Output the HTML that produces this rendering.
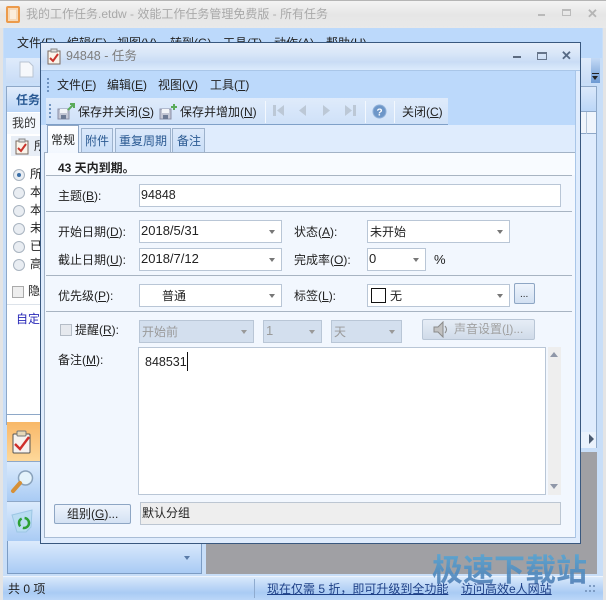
<!DOCTYPE html>
<html><head><meta charset="utf-8">
<style>
html,body{margin:0;padding:0;background:#fff}
#r{position:relative;width:606px;height:600px;overflow:hidden;background:#dfecfd;font:12px/16px "Liberation Sans","Noto Sans CJK SC",sans-serif;color:#222}
#r div,#r span.t,#r svg{position:absolute}
.t{white-space:nowrap}
u{text-decoration:underline}
.inp{background:#fff;border:1px solid #b9c6d6;box-sizing:border-box}
.dis{background:#d3dfee;border:1px solid #b9c6d6;box-sizing:border-box}
.arr{width:0;height:0;border-left:3.5px solid transparent;border-right:3.5px solid transparent;border-top:4px solid #777}
.ln{height:1px;background:#a8b4c2}
.rad{width:12px;height:12px;border-radius:50%;border:1px solid #a9b4c0;background:#e9edf2;box-sizing:border-box}
.dot{width:2px;height:2px;background:#6f93c0}
.d{font-size:13px}
</style></head><body><div id="r">

<!-- main window -->
<div style="left:0;top:0;width:606px;height:1px;background:#b5b5b5"></div>
<div style="left:0;top:1px;width:606px;height:27px;background:linear-gradient(#f4f4f4,#e6e6e6 50%,#e9e9e9)"></div>
<svg style="left:6px;top:6px" width="14" height="17"><rect x="1" y="1" width="12" height="15" rx="1" fill="#f6d9b8" stroke="#ec9a4a" stroke-width="2"/><rect x="4" y="4" width="6" height="9" fill="#fbeedd"/></svg>
<span class="t" style="left:26px;top:6px;color:#a9a9a9">我的工作任务.etdw - 效能工作任务管理免费版 - 所有任务</span>
<div style="left:538px;top:14px;width:7px;height:2px;background:#b9b9b9"></div>
<div style="left:562px;top:9px;width:9px;height:7px;border:1px solid #bbb;border-top-width:2px;box-sizing:border-box"></div>
<span class="t" style="left:587px;top:6px;color:#b5b5b5;font-weight:bold;font-size:13px">✕</span>

<div style="left:0;top:28px;width:606px;height:572px;background:#c8def8"></div>
<div style="left:0;top:28px;width:3px;height:572px;background:#e4e4e4"></div>
<div style="left:603px;top:28px;width:3px;height:572px;background:#e4e4e4"></div>
<div style="left:4px;top:28px;width:598px;height:30px;background:#bcd9fb"></div>
<span class="t" style="left:17px;top:35px">文件(F)</span>
<span class="t" style="left:67px;top:35px">编辑(E)</span>
<span class="t" style="left:117px;top:35px">视图(V)</span>
<span class="t" style="left:170px;top:35px">转到(G)</span>
<span class="t" style="left:223px;top:35px">工具(T)</span>
<span class="t" style="left:274px;top:35px">动作(A)</span>
<span class="t" style="left:326px;top:35px">帮助(H)</span>
<div style="left:6px;top:58px;width:590px;height:25px;background:linear-gradient(#dfebfb,#c8dcf6)"></div>
<div style="left:591px;top:58px;width:9px;height:25px;background:linear-gradient(#c4daf6,#6d9ad3)"></div>
<div style="left:592px;top:73px;width:7px;height:1px;background:#222"></div>
<div class="arr" style="left:592px;top:76px;border-top-color:#222"></div>
<svg style="left:19px;top:61px" width="15" height="17"><path d="M1 1h9l4 4v11H1z" fill="#f6f8fb" stroke="#b9c4d2"/></svg>

<!-- left pane -->
<div style="left:6px;top:86px;width:35px;height:339px;background:#fff;border:1px solid #8ea8c8;box-sizing:border-box"></div>
<div style="left:7px;top:87px;width:34px;height:25px;background:linear-gradient(#e3eefc,#b9d5f7)"></div>
<span class="t" style="left:16px;top:92px;color:#2a5a94;font-weight:bold">任务</span>
<div style="left:7px;top:113px;width:34px;height:21px;background:#f4f8fd"></div>
<span class="t" style="left:12px;top:115px;color:#333">我的</span>
<div style="left:11px;top:136px;width:30px;height:20px;background:#e8eef6"></div>
<svg style="left:15px;top:138px" width="15" height="17"><rect x="1" y="3" width="12" height="13" fill="#fbf4ea" stroke="#7a6a60"/><rect x="4" y="1" width="6" height="3" fill="#ddd" stroke="#888"/><path d="M3 10l3 3 5-7" stroke="#c8342c" stroke-width="2" fill="none"/></svg>
<span class="t" style="left:34px;top:138px">所</span>
<div class="rad" style="left:13px;top:169px"></div><div style="left:17px;top:173px;width:4px;height:4px;border-radius:50%;background:#3b6fa8"></div>
<div class="rad" style="left:13px;top:187px"></div>
<div class="rad" style="left:13px;top:205px"></div>
<div class="rad" style="left:13px;top:223px"></div>
<div class="rad" style="left:13px;top:241px"></div>
<div class="rad" style="left:13px;top:259px"></div>
<span class="t" style="left:30px;top:166px">所</span>
<span class="t" style="left:30px;top:184px">本</span>
<span class="t" style="left:30px;top:202px">本</span>
<span class="t" style="left:30px;top:220px">未</span>
<span class="t" style="left:30px;top:238px">已</span>
<span class="t" style="left:30px;top:256px">高</span>
<div style="left:12px;top:286px;width:12px;height:12px;background:#eee;border:1px solid #aaa;box-sizing:border-box"></div>
<span class="t" style="left:28px;top:283px">隐</span>
<div style="left:7px;top:304px;width:34px;height:1px;background:#dde3ea"></div>
<span class="t" style="left:16px;top:311px;color:#2a2ab8">自定</span>
<div style="left:7px;top:414px;width:34px;height:1px;background:#8ea8c8"></div>
<div style="left:7px;top:422px;width:34px;height:39px;background:linear-gradient(#f8b868,#fbc47c 40%,#fdd89a)"></div>
<svg style="left:11px;top:429px" width="22" height="26"><rect x="2" y="5" width="17" height="19" rx="1" fill="#f6f2ee" stroke="#555"/><rect x="6" y="2" width="9" height="5" rx="1" fill="#e6d8b8" stroke="#777"/><path d="M4 15l5 5 9-12" stroke="#cf2f2a" stroke-width="2.4" fill="none"/></svg>
<div style="left:7px;top:461px;width:34px;height:40px;background:linear-gradient(#dcebfc,#a9cbf4);border-top:1px solid #8ea8c8;box-sizing:border-box"></div>
<svg style="left:10px;top:468px" width="26" height="26"><circle cx="15.500" cy="10" r="7" fill="#e5f3fb" stroke="#8aa2bb" stroke-width="1.500"/><path d="M10 15l-7 8" stroke="#d69038" stroke-width="4" stroke-linecap="round"/></svg>
<div style="left:7px;top:501px;width:34px;height:40px;background:linear-gradient(#dcebfc,#a9cbf4);border-top:1px solid #8ea8c8;box-sizing:border-box"></div>
<svg style="left:11px;top:509px" width="23" height="25"><path d="M1 6l20-5-1 17-5 5H6z" fill="#b9dcf2" stroke="#9cc6e4"/><circle cx="13" cy="14" r="5" fill="none" stroke="#2da035" stroke-width="2.500" stroke-dasharray="9 3"/></svg>
<div style="left:7px;top:541px;width:195px;height:33px;background:linear-gradient(#dcebfc,#a9cbf4);border:1px solid #7c9cc4;border-top:0;box-sizing:border-box"></div>
<div class="arr" style="left:184px;top:556px;border-top-color:#5a7ba8"></div>

<!-- right strip and grey -->
<div style="left:581px;top:86px;width:16px;height:26px;background:linear-gradient(#dbe9fb,#bbd6f7);border:1px solid #8ea8c8;border-left:0;box-sizing:border-box"></div>
<div style="left:581px;top:112px;width:16px;height:22px;background:#f0f5fc;border-right:1px solid #8ea8c8;border-bottom:1px solid #8ea8c8;box-sizing:border-box"></div>
<div style="left:586px;top:112px;width:1px;height:22px;background:#b5c5d8"></div>
<div style="left:581px;top:134px;width:16px;height:298px;background:#dfecfd;border-right:1px solid #8ea8c8;box-sizing:border-box"></div>
<div style="left:581px;top:432px;width:16px;height:16px;background:#eaf2fc;border-right:1px solid #8ea8c8;box-sizing:border-box"></div>
<div style="left:589px;top:434px;width:0;height:0;border-top:5px solid transparent;border-bottom:5px solid transparent;border-left:5px solid #4a5a70"></div>
<div style="left:206px;top:543px;width:391px;height:31px;background:#a0a0a4"></div>
<div style="left:581px;top:452px;width:16px;height:92px;background:#a0a0a4"></div>

<!-- status bar -->
<div style="left:3px;top:576px;width:600px;height:24px;background:linear-gradient(#dcebfc,#c6dcf8 30%,#a9cbf4 70%,#bcd7f8)"></div>
<div style="left:3px;top:576px;width:600px;height:1px;background:#eef4fc"></div>
<span class="t" style="left:8px;top:581px;color:#222">共 0 项</span>
<div style="left:254px;top:579px;width:1px;height:19px;background:#8fabcf"></div>
<span class="t" style="left:267px;top:581px;color:#1d3f86"><u>现在仅需 5 折，即可升级到全功能</u></span>
<span class="t" style="left:461px;top:581px;color:#1d3f86"><u>访问高效e人网站</u></span>
<div style="left:589px;top:585px;width:2px;height:2px;background:#7d9cc4"></div>
<div style="left:593px;top:585px;width:2px;height:2px;background:#7d9cc4"></div>
<div style="left:589px;top:590px;width:2px;height:2px;background:#7d9cc4"></div>
<div style="left:593px;top:590px;width:2px;height:2px;background:#7d9cc4"></div>
<div style="left:585px;top:590px;width:2px;height:2px;background:#7d9cc4"></div>

<!-- dialog -->
<div style="left:40px;top:42px;width:541px;height:502px;background:#dfecfd;border:1px solid #39587f;box-sizing:border-box"></div>
<div style="left:41px;top:43px;width:539px;height:27px;background:linear-gradient(#e6eefa,#d8e6f8 40%,#c9dcf5 70%,#dcebfc)"></div>
<div style="left:41px;top:70px;width:539px;height:1px;background:#a9c6e8"></div>
<div style="left:41px;top:71px;width:535px;height:54px;background:#bcd9fb"></div>
<svg style="left:46px;top:48px" width="16" height="17"><rect x="2" y="3" width="12" height="13" fill="#fbf4ea" stroke="#7a6a60"/><rect x="5" y="1" width="6" height="3" fill="#ddd" stroke="#888"/><path d="M4 10l3 3 5-7" stroke="#c8342c" stroke-width="2" fill="none"/></svg>
<span class="t" style="left:66px;top:48px;color:#7d7d7d;font-size:12.500px">94848 - 任务</span>
<div style="left:513px;top:56px;width:8px;height:2px;background:#5c6b80"></div>
<div style="left:537px;top:52px;width:10px;height:8px;border:1px solid #66758a;border-top-width:2px;box-sizing:border-box"></div>
<span class="t" style="left:561px;top:48px;color:#566a85;font-weight:bold;font-size:13px">✕</span>

<div class="dot" style="left:47px;top:78px"></div><div class="dot" style="left:47px;top:82px"></div><div class="dot" style="left:47px;top:86px"></div><div class="dot" style="left:47px;top:90px"></div>
<span class="t" style="left:57px;top:77px">文件(<u>F</u>)</span>
<span class="t" style="left:107px;top:77px">编辑(<u>E</u>)</span>
<span class="t" style="left:158px;top:77px">视图(<u>V</u>)</span>
<span class="t" style="left:210px;top:77px">工具(<u>T</u>)</span>

<!-- toolbar -->
<div style="left:46px;top:98px;width:402px;height:27px;background:linear-gradient(#dfebfb,#cfe1f8);border-bottom:1px solid #7fa0c8;box-sizing:border-box"></div>
<div class="dot" style="left:49px;top:104px"></div><div class="dot" style="left:49px;top:108px"></div><div class="dot" style="left:49px;top:112px"></div><div class="dot" style="left:49px;top:116px"></div>
<svg style="left:56px;top:102px" width="20" height="18"><path d="M2 7h11v10H2z" fill="#c3c6d4" stroke="#8a8fa6"/><rect x="4" y="7" width="7" height="4" fill="#f2f4f8"/><rect x="5" y="13" width="5" height="4" fill="#6d7a94"/><path d="M12 8l5-5M14 2h4v4" stroke="#5aab5a" stroke-width="2" fill="none"/></svg>
<span class="t" style="left:78px;top:104px">保存并关闭(<u>S</u>)</span>
<svg style="left:158px;top:102px" width="20" height="18"><path d="M2 7h11v10H2z" fill="#c3c6d4" stroke="#8a8fa6"/><rect x="4" y="7" width="7" height="4" fill="#f2f4f8"/><rect x="5" y="13" width="5" height="4" fill="#6d7a94"/><path d="M13 5h6M16 2v6" stroke="#5aab5a" stroke-width="2" fill="none"/></svg>
<span class="t" style="left:180px;top:104px">保存并增加(<u>N</u>)</span>
<div style="left:265px;top:101px;width:1px;height:22px;background:#f3f8fe"></div>
<svg style="left:272px;top:103px" width="90" height="16"><g fill="#bcc8d6"><rect x="1" y="2" width="3" height="11"/><path d="M12 2v11l-7-5.500z"/><path d="M34 2v11l-7-5.500z"/><path d="M51 2v11l7-5.500z"/><path d="M73 2v11l7-5.500z"/><rect x="81" y="2" width="3" height="11"/></g></svg>
<div style="left:365px;top:101px;width:1px;height:22px;background:#f3f8fe"></div>
<svg style="left:372px;top:104px" width="15" height="15"><circle cx="7.500" cy="7.500" r="6.500" fill="#6d96c8" stroke="#8fb0d8"/><text x="7.500" y="11.500" text-anchor="middle" font-size="10" font-weight="bold" fill="#fff" font-family="Liberation Sans">?</text></svg>
<div style="left:394px;top:101px;width:1px;height:22px;background:#f3f8fe"></div>
<span class="t" style="left:402px;top:104px">关闭(<u>C</u>)</span>

<!-- tabs and panel -->
<div style="left:41px;top:125px;width:535px;height:414px;background:#dfecfd"></div>
<div style="left:44px;top:152px;width:532px;height:386px;background:#f2f7fe;border:1px solid #a2b2c6;border-bottom:0;box-sizing:border-box"></div>
<div style="left:47px;top:125px;width:32px;height:28px;background:linear-gradient(#fff,#f2f7fe);border:1px solid #8fa6c4;border-bottom:0;box-sizing:border-box"></div>
<div style="left:81px;top:128px;width:32px;height:24px;background:linear-gradient(#dce9fa,#c9def8);border:1px solid #9db2cc;border-bottom:0;box-sizing:border-box"></div>
<div style="left:115px;top:128px;width:56px;height:24px;background:linear-gradient(#dce9fa,#c9def8);border:1px solid #9db2cc;border-bottom:0;box-sizing:border-box"></div>
<div style="left:172px;top:128px;width:33px;height:24px;background:linear-gradient(#dce9fa,#c9def8);border:1px solid #9db2cc;border-bottom:0;box-sizing:border-box"></div>
<span class="t" style="left:51px;top:132px">常规</span>
<span class="t" style="left:85px;top:133px;color:#2b5a92">附件</span>
<span class="t" style="left:119px;top:133px;color:#2b5a92">重复周期</span>
<span class="t" style="left:177px;top:133px;color:#2b5a92">备注</span>
<div style="left:45px;top:153px;width:530px;height:22px;background:#f8fbff"></div>

<span class="t" style="left:58px;top:160px;font-weight:bold">43 天内到期。</span>
<div class="ln" style="left:46px;top:175px;width:526px"></div>
<span class="t" style="left:58px;top:188px">主题(<u>B</u>):</span>
<div class="inp" style="left:139px;top:184px;width:422px;height:23px"></div>
<span class="t" style="left:141px;top:187px;font-size:12.500px">94848</span>
<div class="ln" style="left:46px;top:211px;width:526px"></div>

<span class="t" style="left:58px;top:224px">开始日期(<u>D</u>):</span>
<div class="inp" style="left:139px;top:220px;width:143px;height:23px"></div>
<span class="t d" style="left:141px;top:223px">2018/5/31</span>
<div class="arr" style="left:269px;top:230px"></div>
<span class="t" style="left:294px;top:224px">状态(<u>A</u>):</span>
<div class="inp" style="left:367px;top:220px;width:143px;height:23px"></div>
<span class="t" style="left:370px;top:224px">未开始</span>
<div class="arr" style="left:497px;top:230px"></div>

<span class="t" style="left:58px;top:252px">截止日期(<u>U</u>):</span>
<div class="inp" style="left:139px;top:248px;width:143px;height:23px"></div>
<span class="t d" style="left:141px;top:251px">2018/7/12</span>
<div class="arr" style="left:269px;top:258px"></div>
<span class="t" style="left:294px;top:252px">完成率(<u>O</u>):</span>
<div class="inp" style="left:367px;top:248px;width:59px;height:23px"></div>
<span class="t d" style="left:369px;top:251px">0</span>
<div class="arr" style="left:413px;top:258px"></div>
<span class="t d" style="left:434px;top:252px">%</span>
<div class="ln" style="left:46px;top:275px;width:526px"></div>

<span class="t" style="left:58px;top:288px">优先级(<u>P</u>):</span>
<div class="inp" style="left:139px;top:284px;width:143px;height:23px"></div>
<span class="t" style="left:162px;top:288px">普通</span>
<div class="arr" style="left:269px;top:294px"></div>
<span class="t" style="left:294px;top:288px">标签(<u>L</u>):</span>
<div class="inp" style="left:367px;top:284px;width:143px;height:23px"></div>
<div style="left:371px;top:288px;width:15px;height:15px;border:1px solid #111;box-sizing:border-box;background:#fff"></div>
<span class="t" style="left:390px;top:288px">无</span>
<div class="arr" style="left:497px;top:294px"></div>
<div style="left:514px;top:283px;width:21px;height:21px;background:linear-gradient(#eef4fc,#d2e0f2);border:1px solid #8ea6c4;border-radius:2px;box-sizing:border-box"></div>
<span class="t" style="left:520px;top:287px;font-size:10px">...</span>
<div class="ln" style="left:46px;top:311px;width:526px"></div>

<div style="left:60px;top:324px;width:12px;height:12px;background:#e6e9ee;border:1px solid #b4bcc6;box-sizing:border-box"></div>
<span class="t" style="left:75px;top:322px">提醒(<u>R</u>):</span>
<div class="dis" style="left:139px;top:320px;width:115px;height:23px"></div>
<span class="t" style="left:142px;top:324px;color:#9a9a9a">开始前</span>
<div class="arr" style="left:241px;top:330px;border-top-color:#999"></div>
<div class="dis" style="left:263px;top:320px;width:59px;height:23px"></div>
<span class="t d" style="left:266px;top:323px;color:#9a9a9a">1</span>
<div class="arr" style="left:309px;top:330px;border-top-color:#999"></div>
<div class="dis" style="left:331px;top:320px;width:71px;height:23px"></div>
<span class="t" style="left:334px;top:324px;color:#9a9a9a">天</span>
<div class="arr" style="left:389px;top:330px;border-top-color:#999"></div>
<div style="left:422px;top:319px;width:113px;height:21px;background:linear-gradient(#e6edf6,#d0dbe9);border:1px solid #b9c6d6;border-radius:2px;box-sizing:border-box"></div>
<svg style="left:433px;top:321px" width="18" height="17"><path d="M1 6h4l5-5v15l-5-5H1z" fill="#c2c2c2" stroke="#8a8a8a"/><path d="M12 5q3 3.500 0 7" stroke="#8a8a8a" fill="none"/></svg>
<span class="t" style="left:454px;top:321px;color:#a0a0a0">声音设置(<u>I</u>)...</span>

<span class="t" style="left:58px;top:352px">备注(<u>M</u>):</span>
<div class="inp" style="left:138px;top:347px;width:408px;height:148px"></div>
<span class="t" style="left:145px;top:354px;font-size:12.500px">848531</span>
<div style="left:187px;top:352px;width:1px;height:19px;background:#111"></div>
<div style="left:548px;top:347px;width:13px;height:148px;background:#eeeeee"></div>
<div class="arr" style="left:550px;top:352px;border-left-width:4.500px;border-right-width:4.500px;border-top:0;border-bottom:5px solid #8f97a8"></div>
<div class="arr" style="left:550px;top:484px;border-left-width:4.500px;border-right-width:4.500px;border-top:5px solid #8f97a8"></div>

<div style="left:54px;top:504px;width:77px;height:20px;background:linear-gradient(#eef4fc,#d4e2f3);border:1px solid #8ea6c4;border-radius:2px;box-sizing:border-box"></div>
<span class="t" style="left:67px;top:506px">组别(<u>G</u>)...</span>
<div style="left:140px;top:502px;width:421px;height:23px;background:#eeeeee;border:1px solid #bcc6d2;box-sizing:border-box"></div>
<span class="t" style="left:142px;top:505px">默认分组</span>
<div style="left:45px;top:537px;width:530px;height:1px;background:#a9bdd6"></div>
<div style="left:575px;top:71px;width:1px;height:468px;background:#a9c6e8"></div>
<div style="left:41px;top:538px;width:535px;height:5px;background:#dfecfd"></div>

<!-- watermark -->
<span class="t" style="left:432px;top:552px;font-size:31px;line-height:38px;font-weight:bold;color:transparent;background:linear-gradient(#55a8d8,#4a74ad);-webkit-background-clip:text;background-clip:text;opacity:.88">极速下载站</span>
</div></body></html>
